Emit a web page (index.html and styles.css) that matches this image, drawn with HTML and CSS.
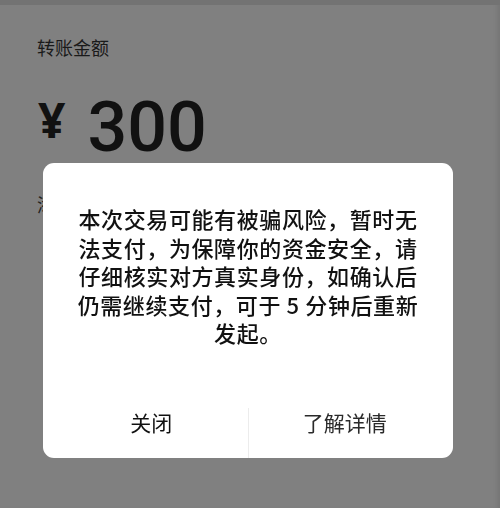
FILE: index.html
```html
<!DOCTYPE html>
<html lang="zh-CN">
<head>
<meta charset="utf-8">
<title>转账</title>
<link rel="stylesheet" href="styles.css">
</head>
<body>
<div class="topbar"></div>
<main class="transfer">
  <div class="label">转账金额</div>
  <div class="amount">
    <span class="currency">¥</span>
    <span class="value">300</span>
  </div>
  <div class="note">添加</div>
</main>

<div class="mask">
  <div class="dialog" role="alertdialog">
    <p class="message">本次交易可能有被骗风险，暂时无法支付，为保障你的资金安全，请仔细核实对方真实身份，如确认后仍需继续支付，可于 5 分钟后重新发起。</p>
    <div class="actions">
      <button class="btn btn-close">关闭</button>
      <span class="divider"></span>
      <button class="btn btn-more">了解详情</button>
    </div>
  </div>
</div>
</body>
</html>
```

FILE: styles.css
```css
html, body {
  margin: 0;
  height: 100%;
}

body {
  background: #808080;
  font-family: "Noto Sans CJK SC", "Noto Sans", sans-serif;
  color: #161616;
  overflow: hidden;
  box-shadow: inset -5px 0 4px -2px rgba(0, 0, 0, 0.08);
}

.topbar {
  height: 5px;
  background: #737373;
}

.transfer {
  padding: 30px 0 0 37px;
}

.label {
  font-size: 18px;
  line-height: 24px;
  color: #1a1a1a;
}

.amount {
  display: flex;
  align-items: flex-start;
  margin-top: 35px;
  height: 70px;
}

.currency {
  font-family: "Noto Sans", sans-serif;
  font-weight: 700;
  font-size: 48px;
  line-height: 48px;
  margin: 2px 0 0 1px;
  color: #111;
}

.value {
  font-family: Roboto, "Noto Sans", sans-serif;
  font-weight: 500;
  font-size: 70px;
  line-height: 66px;
  margin-left: 22px;
  color: #111;
}

.note {
  margin-top: 28px;
  font-size: 18px;
  line-height: 24px;
  color: #222;
}

.mask {
  position: fixed;
  inset: 0;
  padding: 163px 0 0 43px;
}

.dialog {
  width: 410px;
  background: #fff;
  border-radius: 11px;
  overflow: hidden;
}

.message {
  margin: 0 auto;
  padding-top: 41px;
  width: 342px;
  font-size: 22px;
  font-weight: 500;
  line-height: 28.6px;
  letter-spacing: 0.6px;
  text-align: center;
  color: #111;
}

.actions {
  display: flex;
  height: 65px;
  margin-top: 46px;
}

.btn {
  flex: 1;
  border: 0;
  background: none;
  padding: 0 0 6px;
  font-family: inherit;
  font-size: 21px;
  color: #111;
}

.btn-close {
  padding-left: 12px;
}

.btn-more {
  padding-right: 12px;
  color: #2a2a2a;
}

.divider {
  width: 1px;
  margin-top: 15px;
  background: #ececec;
}
```
